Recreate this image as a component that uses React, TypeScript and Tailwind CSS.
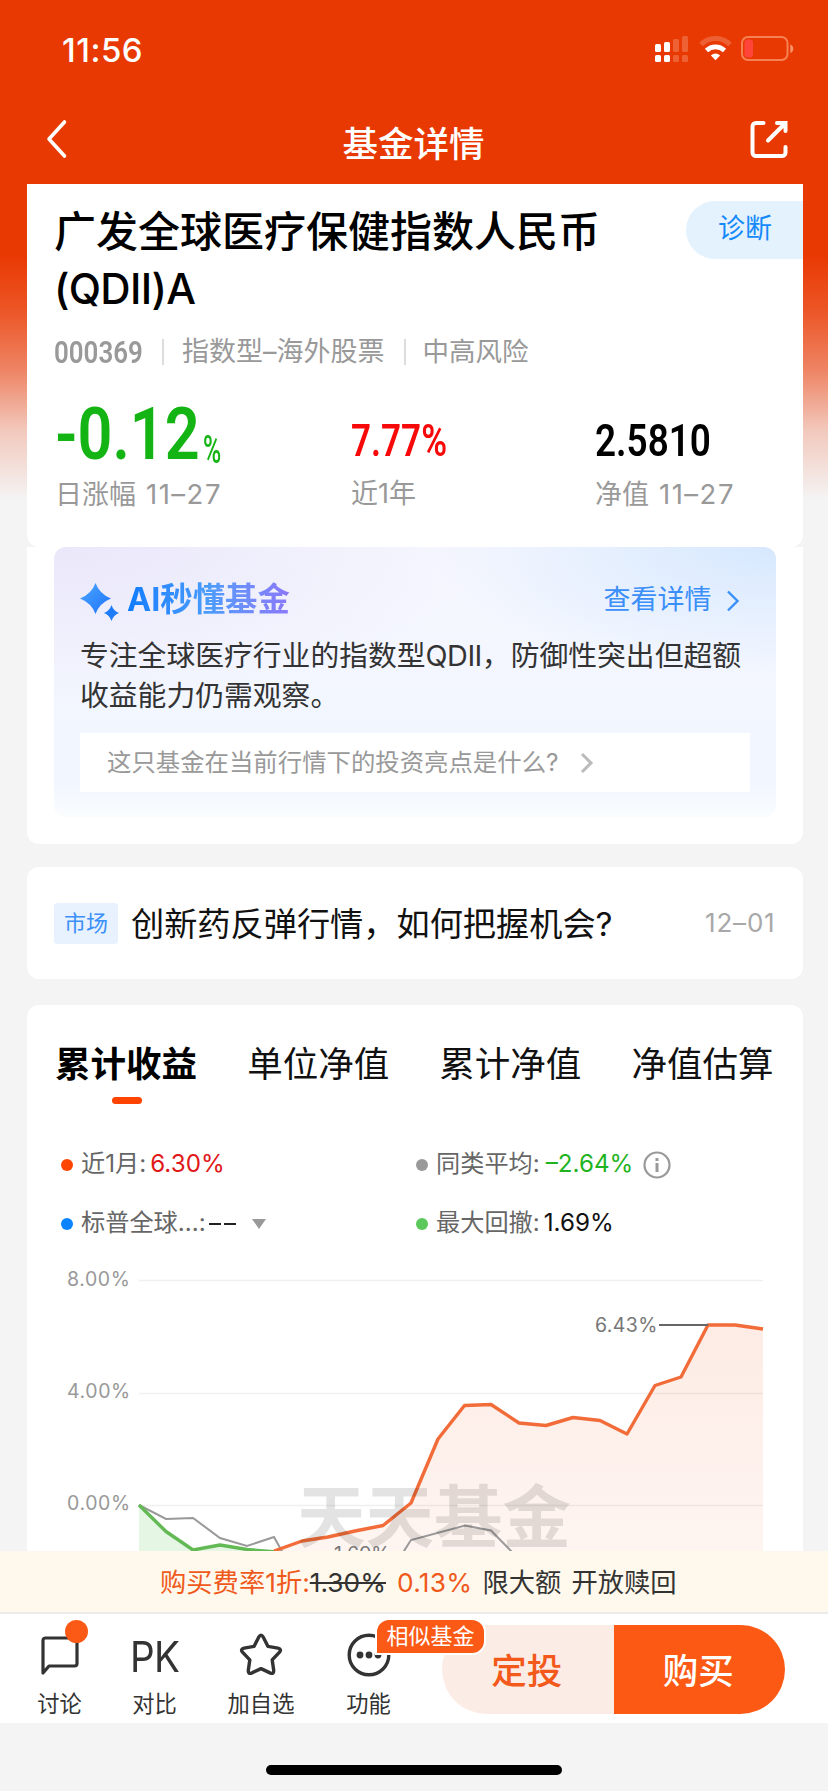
import { ReactNode } from 'react'

const fundTabs = ['累计收益', '单位净值', '累计净值', '净值估算']

// Chart coordinates: the origin is the top left corner of the chart svg
const fundLine: [number, number][] = [
  [247, 289], [275, 279], [301, 275], [328, 269], [356, 263.5], [384, 241],
  [411, 177], [437.5, 143.5], [464, 142.5], [492, 161], [519, 163.5], [546, 155.5],
  [573, 158.5], [600, 172], [628, 123.5], [654, 115], [681, 63], [708, 63], [736, 67]
]
const drawdownLine: [number, number][] = [
  [112, 243], [139, 269.5], [166, 288], [193, 283], [220, 287.5], [250, 290]
]
const averageLine: [number, number][] = [
  [112, 243], [139, 257], [166, 256], [193, 276], [220, 284], [247, 275], [257, 293],
  [370, 300], [384, 278], [438, 263.5], [464, 268.5], [488, 293]
]

const toPoints = (points: [number, number][]) => points.map((p) => p.join(',')).join(' ')

function StatusBar() {
  return (
    <div className="flex h-[98px] items-center justify-between pl-[62px] pr-[34px] pt-[2px]">
      <span className="text-[33px] font-medium leading-none tracking-[0.500px] text-white">11:56</span>
      <svg width="139" height="28" viewBox="655 37 139 28" fill="none">
        <g fill="#fff">
          <rect x="655" y="45" width="6" height="8" rx="1.5" />
          <rect x="664" y="43" width="6" height="10" rx="1.5" />
          <rect x="655" y="56" width="6" height="7" rx="1.5" />
          <rect x="664" y="56" width="6" height="7" rx="1.5" />
        </g>
        <g fill="#fff" opacity="0.2">
          <rect x="673" y="40" width="6" height="13" rx="1.5" />
          <rect x="682" y="37" width="6" height="16" rx="1.5" />
          <rect x="673" y="56" width="6" height="7" rx="1.5" />
          <rect x="682" y="56" width="6" height="7" rx="1.5" />
        </g>
        <path d="M701 45.5a20.5 20.5 0 0 1 29 0" stroke="#fff" strokeOpacity="0.2" strokeWidth="5" />
        <path d="M706.5 51.5a13 13 0 0 1 18 0" stroke="#fff" strokeWidth="4.6" />
        <path d="M715.5 61.2l-4.6-4.8a6.6 6.6 0 0 1 9.2 0z" fill="#fff" />
        <rect x="742" y="38" width="45.5" height="23" rx="6" stroke="#ffb48c" strokeOpacity="0.6" strokeWidth="2" />
        <rect x="744.5" y="40.5" width="8.5" height="18" rx="3" fill="#ff453a" />
        <path d="M790.3 45.500c4 1.500 4 7 0 8.500z" fill="#ffc8a8" fillOpacity="0.65" />
      </svg>
    </div>
  )
}

function TitleBar() {
  return (
    <div className="flex h-[86px] items-start justify-between pl-[45px] pr-[39px] pt-[21px]">
      <svg width="24" height="40" viewBox="0 0 24 40" fill="none">
        <path d="M19.500 3L4 20l15.500 17" stroke="#fff" strokeWidth="3.600" strokeLinecap="round" strokeLinejoin="round" />
      </svg>
      <h1 className="pl-[9px] pt-[5px] text-[35.500px] font-medium leading-[42px] text-white">基金详情</h1>
      <svg width="40" height="40" viewBox="0 0 40 40" fill="none" stroke="#fff" strokeWidth="4" strokeLinecap="round">
        <path d="M14.500 4H7a3.500 3.500 0 0 0-3.500 3.500v26A3.500 3.500 0 0 0 7 37h26a3.500 3.500 0 0 0 3.500-3.500V28" />
        <path d="M19 21.500L36 4.500M28 4h8.500v8" />
      </svg>
    </div>
  )
}

function Stat({ label, date, className, children }: { label: string; date?: string; className: string; children: ReactNode }) {
  return (
    <div className={className}>
      <div className="flex h-[72px] items-end">{children}</div>
      <p className="whitespace-nowrap text-[27px] leading-[36px] text-[#999]">
        {label}
        {date && <span className="ml-[10px] text-[27.500px] tracking-[1.500px]">{date}</span>}
      </p>
    </div>
  )
}

function FundHeader() {
  return (
    <section className="h-[363px] rounded-b-xl bg-white">
      <div className="flex justify-between pt-[17px]">
        <h2 className="whitespace-nowrap pl-[27px] pt-[2px] text-[42px] font-medium leading-[57px] text-black">
          广发全球医疗保健指数人民币
          <br />
          <span className="tracking-[-0.700px]">(QDII)A</span>
        </h2>
        <button className="h-[58px] w-[117px] rounded-l-full bg-[#e4f2fe] pb-px pl-[2px] text-[27px] text-[#1489fa]">诊断</button>
      </div>
      <div className="mt-[14px] flex h-[42px] items-center pl-[27px] text-[26.500px] text-[#999]">
        <span className="w-[108px] origin-left scale-x-[0.81] font-['Roboto'] text-[32px] font-semibold">000369</span>
        <i className="h-[26px] w-[2px] bg-[#ddd]" />
        <span className="ml-[18px] whitespace-nowrap text-[27px]">指数型–海外股票</span>
        <i className="ml-[19px] h-[26px] w-[2px] bg-[#ddd]" />
        <span className="ml-[17px]">中高风险</span>
      </div>
      <div className="mt-[31px] flex">
        <Stat label="日涨幅" date="11–27" className="w-[324px] pl-[28px]">
          <span className="w-[148px] origin-left scale-x-[0.85] whitespace-nowrap pb-[3px] font-['Roboto'] text-[72px] font-semibold leading-[76px] text-[#14b414]">
            -0.12
          </span>
          <span className="origin-left scale-x-[0.65] pb-[5px] font-['Roboto'] text-[38px] font-medium leading-[42px] text-[#14b414]">%</span>
        </Stat>
        <Stat label="近1年" className="w-[244px]">
          <span className="origin-left scale-x-[0.78] pb-[6px] font-['Roboto'] text-[45px] font-semibold leading-[58px] text-[#f70909]">7.77%</span>
        </Stat>
        <Stat label="净值" date="11–27" className="w-[180px]">
          <span className="origin-left scale-x-[0.82] pb-[6px] font-['Roboto'] text-[45px] font-semibold leading-[58px] text-black">2.5810</span>
        </Stat>
      </div>
    </section>
  )
}

function AiSummary() {
  return (
    <section className="h-[297px] rounded-b-xl bg-white px-[27px]">
      <div className="h-[270px] rounded-xl bg-[linear-gradient(to_bottom,transparent_86%,#fafdff_100%),radial-gradient(ellipse_at_100%_0%,#d6e8fe_0%,transparent_34%),radial-gradient(ellipse_at_0%_0%,#eae7fa_0%,transparent_42%),linear-gradient(to_bottom,#f6f7fe,#f0f6ff)] px-[26px] pt-[31px]">
        <div className="flex h-[44px] items-center justify-between pr-[9px]">
          <div className="flex items-center">
            <svg width="42" height="42" viewBox="0 0 42 42" className="mt-1">
              <defs>
                <linearGradient id="spark" x1="0" y1="0" x2="1" y2="1">
                  <stop offset="0" stopColor="#4ba6ff" />
                  <stop offset="1" stopColor="#1f72fb" />
                </linearGradient>
              </defs>
              <path d="M15.500 2Q19.500 13 31 17.500Q19.500 22 15.500 33Q11.500 22 0 17.500Q11.500 13 15.500 2z" fill="url(#spark)" />
              <path d="M31.500 24Q33.500 30 39 32Q33.500 34 31.500 40Q29.500 34 24 32Q29.500 30 31.500 24z" fill="#1f7cf8" />
            </svg>
            <h3 className="ml-[5px] bg-linear-to-r from-[#0c7cfd] via-[#4a9cfb] to-[#8a78fa] bg-clip-text text-[32.400px] font-bold leading-[44px] text-transparent">
              AI秒懂基金
            </h3>
          </div>
          <div className="flex items-center pt-px text-[27px] text-[#3b8ff8]">
            查看详情
            <svg width="16" height="24" viewBox="0 0 16 24" fill="none" className="ml-[13px]">
              <path d="M3 2.500l9.500 9.500L3 21.500" stroke="#3b8ff8" strokeWidth="2.400" />
            </svg>
          </div>
        </div>
        <p className="mt-[14px] whitespace-nowrap text-[28.800px] leading-[40px] text-[#333]">
          专注全球医疗行业的指数型<span className="tracking-[-0.500px]">QDII</span>，防御性突出但超额
          <br />
          收益能力仍需观察。
        </p>
        <div className="mt-[17px] flex h-[59px] w-[670px] items-center bg-white pl-[27px] text-[24.400px] text-[#999]">
          这只基金在当前行情下的投资亮点是什么?
          <svg width="16" height="24" viewBox="0 0 16 24" fill="none" className="ml-[20px]">
            <path d="M3 3l9 9-9 9" stroke="#bbb" strokeWidth="3" />
          </svg>
        </div>
      </div>
    </section>
  )
}

function MarketNews() {
  return (
    <section className="mt-[23px] flex h-[112px] items-center rounded-xl bg-white pl-[27px] pr-[27px]">
      <span className="flex h-[41px] w-[64px] items-center justify-center rounded-[3px] bg-[#e8f2fe] text-[22px] text-[#3b8ff8]">
        市场
      </span>
      <span className="ml-[13px] whitespace-nowrap pt-[3px] text-[33.200px] text-[#111]">创新药反弹行情，如何把握机会?</span>
      <span className="ml-auto pb-px text-[26px] tracking-[0.800px] text-[#a8a8a8]">12–01</span>
    </section>
  )
}

function Legend({ color, label, children }: { color: string; label: string; children: ReactNode }) {
  return (
    <div className="flex h-[59px] items-center whitespace-nowrap text-[24.200px] text-[#666]">
      <i className={`mr-[8px] size-3 rounded-full ${color}`} />
      {label}
      {children}
    </div>
  )
}

function ReturnChart() {
  return (
    <svg width="775" height="289" viewBox="0 0 775 289" className="block">
      <defs>
        <linearGradient id="fund-area" x1="0" y1="0" x2="0" y2="1">
          <stop offset="0" stopColor="#f26a36" stopOpacity="0.130" />
          <stop offset="1" stopColor="#f26a36" stopOpacity="0.070" />
        </linearGradient>
      </defs>
      {[18.5, 131.5, 243.5].map((y) => (
        <line key={y} x1="112" x2="736" y1={y} y2={y} stroke="#f0f0f0" strokeWidth="1.500" />
      ))}
      <g fontSize="19.500" fill="#999" letterSpacing="0.600">
        <text x="40" y="24">8.00%</text>
        <text x="40" y="136">4.00%</text>
        <text x="40" y="248">0.00%</text>
      </g>
      <polygon points={`${toPoints(fundLine)} 736,289`} fill="url(#fund-area)" />
      <polygon points={`${toPoints(drawdownLine)} 112,290`} fill="#5bc85b" fillOpacity="0.160" />
      <polyline points={toPoints(averageLine)} fill="none" stroke="#999" strokeWidth="2" />
      <polyline points={toPoints(drawdownLine)} fill="none" stroke="#63b954" strokeWidth="3.400" strokeLinejoin="round" />
      <polyline points={toPoints(fundLine)} fill="none" stroke="#f26c3a" strokeWidth="3.400" strokeLinejoin="round" />
      <text x="270" y="280" fontSize="68.500" fontWeight="700" fill="#000" fillOpacity="0.110">天天基金</text>
      <line x1="632" x2="681" y1="63" y2="63" stroke="#666" strokeWidth="2" />
      <text x="568" y="70" fontSize="19.500" letterSpacing="0.400" fill="#777">6.43%</text>
      <text x="307" y="299" fontSize="19.500" fill="#777">1.69%</text>
    </svg>
  )
}

function Performance() {
  return (
    <section className="mt-[26px] h-[546px] overflow-hidden rounded-t-xl bg-white">
      <div className="flex justify-between pl-[28px] pr-[29px] pt-[39px]">
        {fundTabs.map((tab, i) => (
          <div key={tab} className="flex flex-col items-center">
            <span className={`text-[35.500px] leading-[42px] ${i === 0 ? 'font-bold text-black' : 'text-[#111]'}`}>{tab}</span>
            {i === 0 && <i className="ml-px mt-[11px] h-[7px] w-[30px] rounded-full bg-[#ff4400]" />}
          </div>
        ))}
      </div>
      <div className="mt-[31px] grid grid-cols-[355px_1fr] pl-[34px]">
        <Legend color="bg-[#ff4400]" label="近1月:">
          <span className="ml-[4px] text-[#e01818]">6.30%</span>
        </Legend>
        <Legend color="bg-[#999]" label="同类平均:">
          <span className="ml-[6px] text-[#1fb41f]">–2.64%</span>
          <svg width="28" height="28" viewBox="0 0 28 28" fill="none" stroke="#999" className="ml-[10px]">
            <circle cx="14" cy="14" r="12.500" strokeWidth="2.200" />
            <path d="M14 12v9M14 7v3" strokeWidth="3" />
          </svg>
        </Legend>
        <Legend color="bg-[#0a84ff]" label="标普全球...:">
          <span className="ml-[3px] flex gap-[3px] text-[#111]">
            <i className="h-[2px] w-[12px] bg-[#222]" />
            <i className="h-[2px] w-[12px] bg-[#222]" />
          </span>
          <i className="ml-[16px] border-x-[7px] border-t-[10px] border-x-transparent border-t-[#999]" />
        </Legend>
        <Legend color="bg-[#5ac85a]" label="最大回撤:">
          <span className="ml-[4px] text-[#111]">1.69%</span>
        </Legend>
      </div>
      <div className="mt-[9px]">
        <ReturnChart />
      </div>
    </section>
  )
}

function FeeBanner() {
  return (
    <div className="flex h-[63px] items-center whitespace-pre border-b-2 border-[#ececec] bg-[#fef9ec] pl-[160px] pt-[2px] text-[26.300px] text-[#333]">
      <span className="text-[#f0591c]">购买费率1折:</span>
      <span className="line-through">1.30%</span>
      <span className="ml-[11px] tracking-[0.300px] text-[#f0591c]">0.13%</span>
      <span className="ml-[10px]">限大额</span>
      <span className="ml-[10px]">开放赎回</span>
    </div>
  )
}

function NavItem({ label, className, children }: { label: string; className: string; children: ReactNode }) {
  return (
    <div className={`flex flex-col items-center text-[#333] ${className}`}>
      <div className="flex h-[44px] items-center justify-center">{children}</div>
      <span className="mt-[11px] whitespace-nowrap text-[22.300px] leading-[32px]">{label}</span>
    </div>
  )
}

function BottomBar() {
  return (
    <div className="relative flex h-[109px] bg-white pt-[19px]">
      <NavItem label="讨论" className="ml-[37px] w-[45px]">
        <svg width="44" height="44" viewBox="0 0 44 44" fill="none" stroke="#333" strokeWidth="3.200" strokeLinejoin="round">
          <path d="M5 40V7.500A2.500 2.500 0 0 1 7.500 5h29A2.500 2.500 0 0 1 39 7.500v23a2.500 2.500 0 0 1-2.500 2.500H11z" />
        </svg>
      </NavItem>
      <i className="absolute left-[65px] top-[6px] size-[23px] rounded-full bg-[#fb5a16]" />
      <NavItem label="对比" className="ml-[50px] w-[45px]">
        <span className="scale-x-[0.92] pt-[4px] text-[42px] leading-none tracking-[-1px]">PK</span>
      </NavItem>
      <NavItem label="加自选" className="ml-[51px] w-[66px]">
        <svg width="46" height="44" viewBox="0 0 46 44" fill="none" stroke="#333" strokeWidth="3.400" strokeLinejoin="round">
          <path d="M20.700 4.200q2.300-3.800 4.600 0l4.700 9.200 9.900 1.700q4.200 1 1.400 4.300l-7.100 7.500 1.500 10.300q.3 4.300-3.700 2.700L23 35.600l-9 4.300q-4 1.600-3.700-2.700l1.500-10.300-7.100-7.500q-2.800-3.300 1.400-4.300l9.900-1.700z" />
        </svg>
      </NavItem>
      <NavItem label="功能" className="ml-[52px] w-[45px]">
        <svg width="46" height="46" viewBox="0 0 46 46" fill="none">
          <circle cx="23" cy="23" r="19.800" stroke="#333" strokeWidth="3.400" />
          <g fill="#333">
            <circle cx="14" cy="23" r="3.400" />
            <circle cx="23" cy="23" r="3.400" />
            <circle cx="32" cy="23" r="3.400" />
          </g>
        </svg>
      </NavItem>
      <div className="ml-[51px] mt-[-8px] flex h-[89px] w-[343px] overflow-hidden rounded-full text-[35.500px] font-medium">
        <button className="flex-1 bg-[#fcece6] pr-[2px] pt-[4px] text-[#f2591a]">定投</button>
        <button className="flex-1 bg-[#fc5a14] pr-[2px] pt-[4px] text-white">购买</button>
      </div>
      <span className="absolute left-[375px] top-[4px] flex h-[37px] w-[111px] items-center justify-center rounded-[14px] rounded-bl-none border-2 border-white bg-[#fb5a16] text-[22px] text-white">
        相似基金
      </span>
    </div>
  )
}

export default function App() {
  return (
    <div className="h-[1791px] w-[828px] overflow-hidden bg-[linear-gradient(to_bottom,#e93902_0px,#e93902_255px,#ec5526_310px,#ee8464_370px,#f2c8bc_430px,#f4f4f4_500px)] font-['Inter','Noto_Sans_CJK_SC',sans-serif]">
      <StatusBar />
      <TitleBar />
      <main className="ml-[27px] w-[775.500px]">
        <FundHeader />
        <AiSummary />
        <MarketNews />
        <Performance />
      </main>
      <FeeBanner />
      <BottomBar />
      <div className="flex justify-center pt-[42px]">
        <i className="h-[10px] w-[296px] rounded-full bg-black" />
      </div>
    </div>
  )
}
